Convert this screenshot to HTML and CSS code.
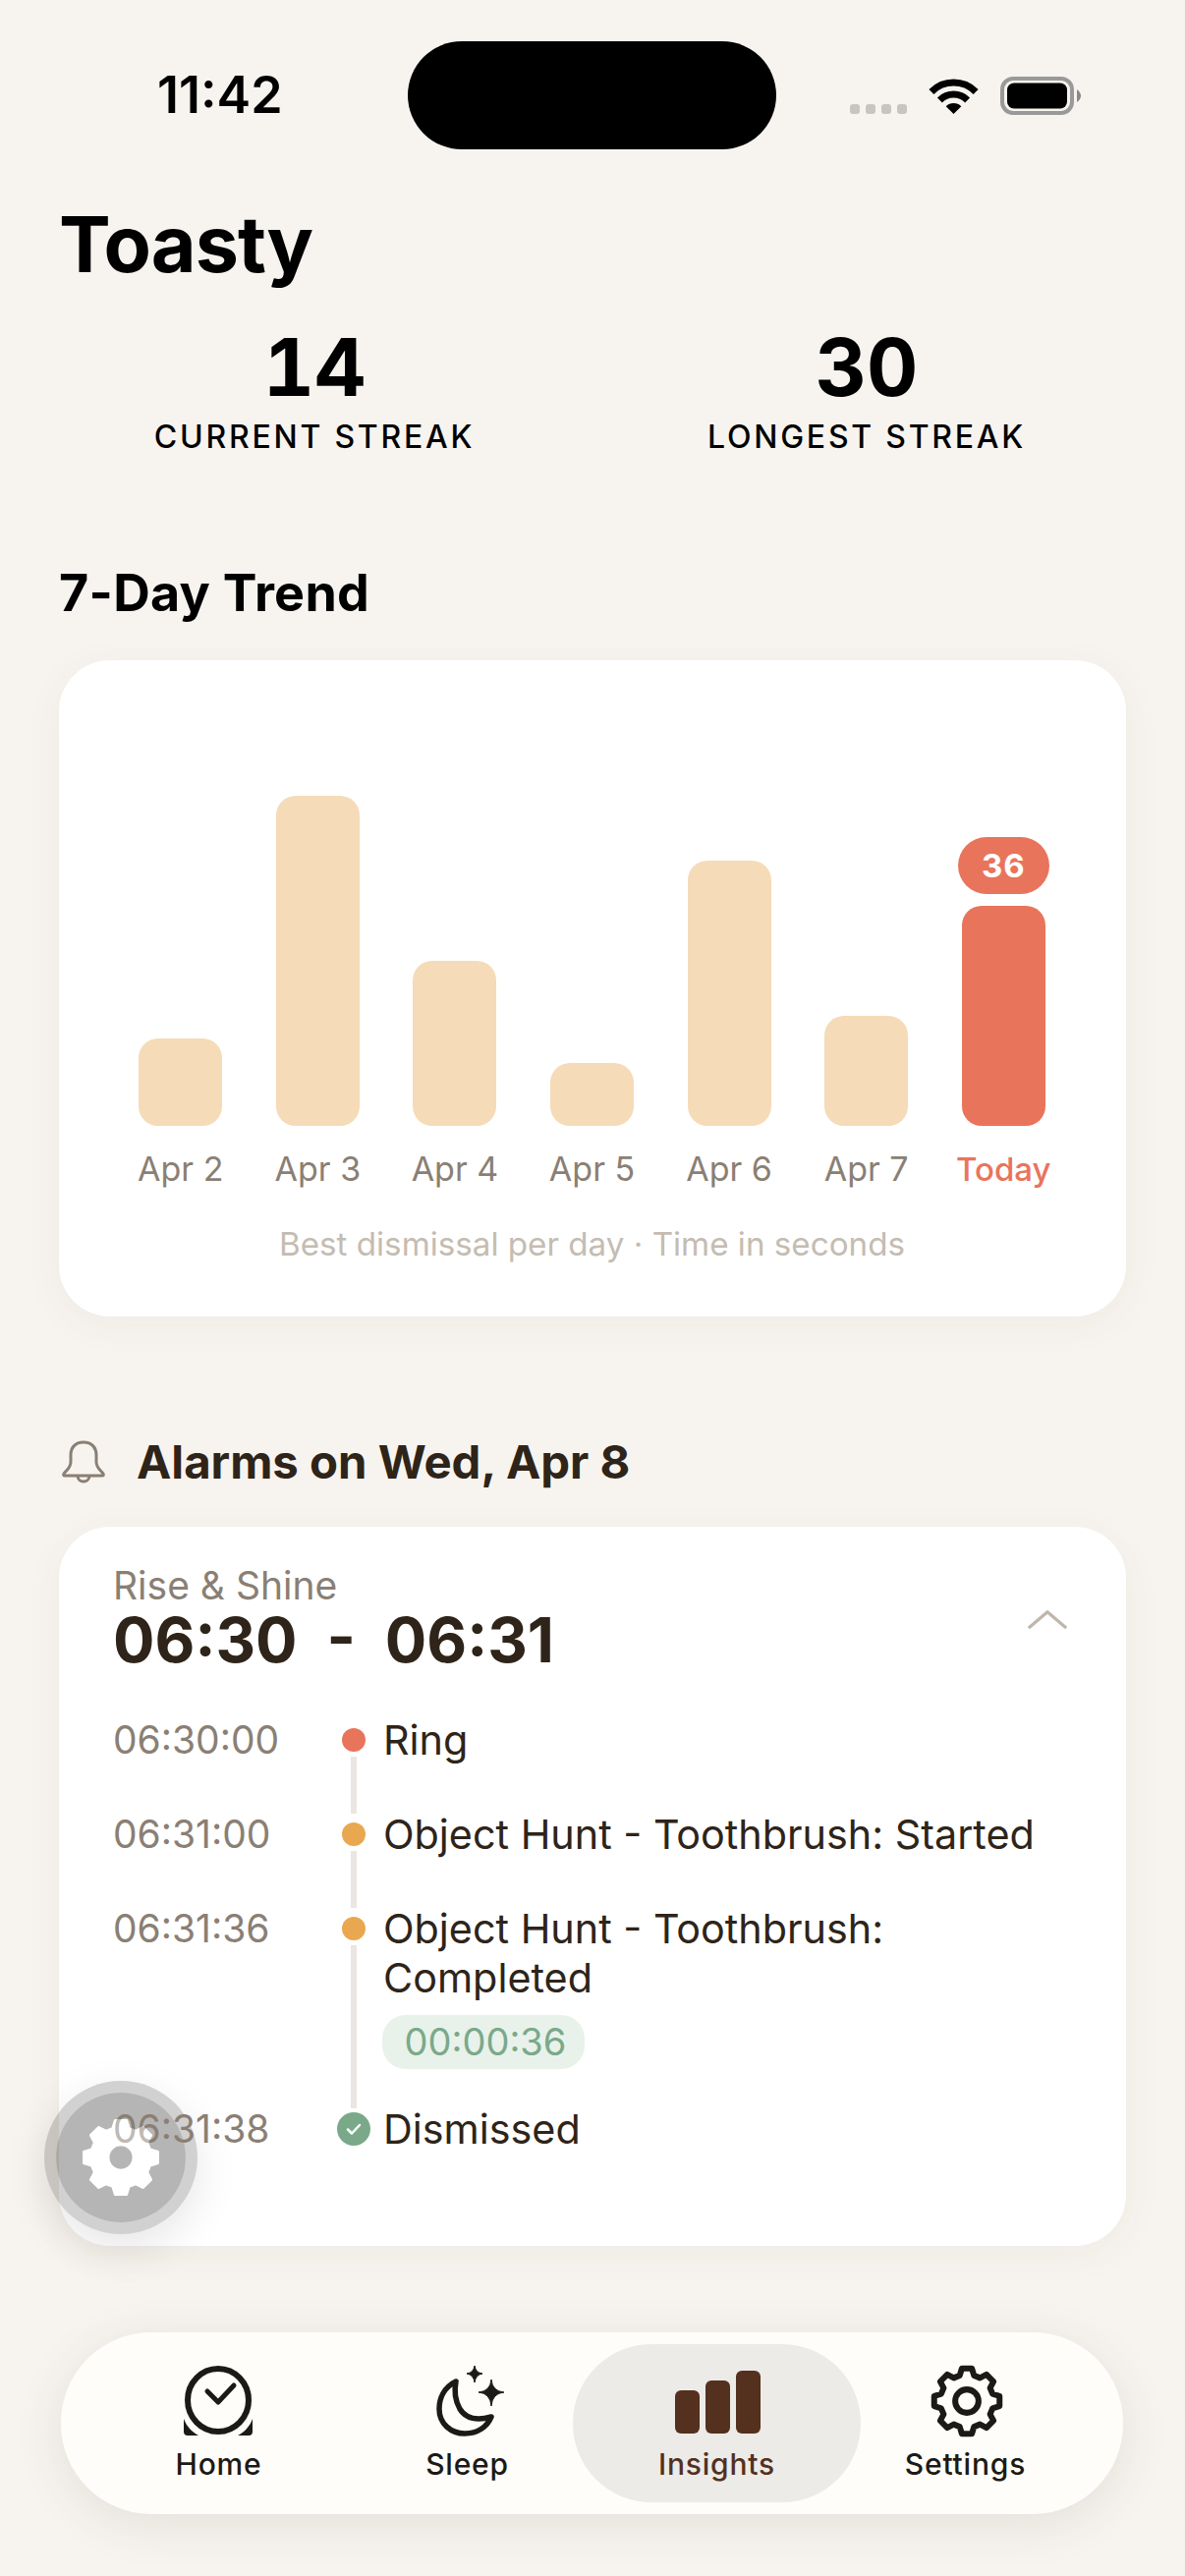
FILE: index.html
```html
<!DOCTYPE html>
<html lang="en">
<head>
<meta charset="utf-8">
<title>Toasty Insights</title>
<link rel="stylesheet" href="styles.css">
</head>
<body>
<div class="screen">
  <header class="status">
    <span class="clock">11:42</span>
    <div class="island"></div>
    <div class="signal"><i></i><i></i><i></i><i></i></div>
    <svg class="wifi" viewBox="0 0 51 37"><path d="M2.9 14.4A32 32 0 0 1 48.1 14.4M11.4 22.9A20 20 0 0 1 39.6 22.9" fill="none" stroke="#000" stroke-width="7"/><path d="M25.5 37L17.7 29.2A11 11 0 0 1 33.3 29.2Z" fill="#000"/></svg>
    <svg class="battery" viewBox="0 0 82 39"><rect x="2" y="2" width="71" height="35" rx="11" fill="none" stroke="#999" stroke-width="4"/><rect x="7" y="6.500" width="61" height="26" rx="7" fill="#000"/><path d="M78 13Q82 16 82 19.500Q82 23 78 26Z" fill="#888"/></svg>
  </header>

  <h1 class="app-title">Toasty</h1>

  <section class="streaks">
    <div class="streak"><div class="streak-num">14</div><div class="streak-label">CURRENT STREAK</div></div>
    <div class="streak"><div class="streak-num">30</div><div class="streak-label">LONGEST STREAK</div></div>
  </section>

  <h2 class="section-title">7-Day Trend</h2>

  <section class="card chart-card">
    <div class="chart">
      <div class="col"><div class="bar" style="height:89px"></div><span class="day">Apr 2</span></div>
      <div class="col"><div class="bar" style="height:336px"></div><span class="day">Apr 3</span></div>
      <div class="col"><div class="bar" style="height:168px"></div><span class="day">Apr 4</span></div>
      <div class="col"><div class="bar" style="height:64px"></div><span class="day">Apr 5</span></div>
      <div class="col"><div class="bar" style="height:270px"></div><span class="day">Apr 6</span></div>
      <div class="col"><div class="bar" style="height:112px"></div><span class="day">Apr 7</span></div>
      <div class="col col-today"><span class="bubble">36</span><div class="bar bar-today" style="height:224px"></div><span class="day day-today">Today</span></div>
    </div>
    <p class="chart-note">Best dismissal per day · Time in seconds</p>
  </section>

  <div class="alarms-head">
    <svg class="bell" viewBox="0 0 46 44"><path d="M23 2C14 2 10 8 10 15V22C10 28 6 30 3 34Q2 36 4 36H42Q44 36 43 34C40 30 36 28 36 22V15C36 8 32 2 23 2ZM17 36C17 44 29 44 29 36" fill="none" stroke="#8a7f74" stroke-width="3" stroke-linejoin="round"/></svg>
    <h2 class="alarms-title">Alarms on Wed, Apr 8</h2>
  </div>

  <section class="card alarm-card">
    <div class="alarm-top">
      <div>
        <div class="alarm-name">Rise &amp; Shine</div>
        <div class="alarm-range">06:30&nbsp; - &nbsp;06:31</div>
      </div>
      <svg class="chevron" viewBox="0 0 44 22"><path d="M2 20L22 3L42 20" fill="none" stroke="#bfb6ac" stroke-width="3.500" stroke-linecap="round" stroke-linejoin="round"/></svg>
    </div>
    <ol class="timeline">
      <li class="event line-short"><span class="ev-time">06:30:00</span><span class="dot dot-ring"></span><div class="ev-text">Ring</div></li>
      <li class="event line-short"><span class="ev-time">06:31:00</span><span class="dot dot-hunt"></span><div class="ev-text">Object Hunt - Toothbrush: Started</div></li>
      <li class="event event-tall line-short"><span class="ev-time">06:31:36</span><span class="dot dot-hunt"></span><div class="ev-text">Object Hunt - Toothbrush:<br>Completed<div class="duration">00:00:36</div></div></li>
      <li class="event"><span class="ev-time ev-time-over">06:31:38</span>
        <svg class="dot-done" viewBox="0 0 34 34"><circle cx="17" cy="17" r="17" fill="#7aa98a"/><path d="M11 17.500L15 21.500L23 13" fill="none" stroke="#fff" stroke-width="2.500" stroke-linecap="round" stroke-linejoin="round"/></svg>
        <div class="ev-text">Dismissed</div></li>
    </ol>
  </section>

  <button class="fab" type="button" aria-label="Settings shortcut">
    <svg class="fab-gear" viewBox="0 0 48 48"><path fill-rule="evenodd" fill="#fff" stroke="#fff" stroke-width="1.500" stroke-linejoin="round" d="M19.400 7.500L20.800 3H27.200L28.600 7.500L32.410 9.080L36.590 6.890L41.110 11.410L38.920 15.590L40.500 19.400L45 20.800V27.200L40.500 28.600L38.920 32.410L41.110 36.590L36.590 41.110L32.410 38.920L28.600 40.500L27.200 45H20.800L19.400 40.500L15.590 38.920L11.410 41.110L6.890 36.590L9.080 32.410L7.500 28.600L3 27.200V20.800L7.500 19.400L9.080 15.590L6.890 11.410L11.410 6.890L15.590 9.080ZM24 16.750A7.250 7.250 0 1 0 24 31.250A7.250 7.250 0 1 0 24 16.750Z"/></svg>
  </button>
  <svg class="fab-glaze" viewBox="0 0 48 48" aria-hidden="true"><path fill-rule="evenodd" fill="#fff" stroke="#fff" stroke-width="1.500" stroke-linejoin="round" d="M19.400 7.500L20.800 3H27.200L28.600 7.500L32.410 9.080L36.590 6.890L41.110 11.410L38.920 15.590L40.500 19.400L45 20.800V27.200L40.500 28.600L38.920 32.410L41.110 36.590L36.590 41.110L32.410 38.920L28.600 40.500L27.200 45H20.800L19.400 40.500L15.590 38.920L11.410 41.110L6.890 36.590L9.080 32.410L7.500 28.600L3 27.200V20.800L7.500 19.400L9.080 15.590L6.890 11.410L11.410 6.890L15.590 9.080ZM24 16.750A7.250 7.250 0 1 0 24 31.250A7.250 7.250 0 1 0 24 16.750Z"/></svg>

  <nav class="tabbar">
    <a class="tab">
      <svg class="tab-icon icon-home" viewBox="0 0 72 72"><ellipse cx="35" cy="35" rx="31" ry="32" fill="none" stroke="#1c1a16" stroke-width="6"/><path d="M24 26L35 37L51 20" fill="none" stroke="#1c1a16" stroke-width="5" stroke-linecap="round" stroke-linejoin="round"/><path d="M0 54C3 62 8 67 15 71H4Q0 71 0 67ZM70 54C67 62 62 67 55 71H66Q70 71 70 67Z" fill="#1c1a16"/></svg>
      <span class="tab-label">Home</span>
    </a>
    <a class="tab">
      <svg class="tab-icon icon-sleep" viewBox="0 0 70 72"><path d="M20 16C8 22 3 33 3 44C3 59 15 69 29 69C42 69 52 62 56 52C42 56 30 54 24 44C19 35 18 26 20 16Z" fill="none" stroke="#1c1a16" stroke-width="5.500" stroke-linejoin="round"/><path d="M56 14Q57 26 69 27Q57 28 56 41Q55 28 43 27Q55 26 56 14ZM39 0Q40 7 47 8Q40 9 39 17Q38 9 31 8Q38 7 39 0Z" fill="#1c1a16" stroke="#1c1a16" stroke-width="1"/></svg>
      <span class="tab-label">Sleep</span>
    </a>
    <a class="tab tab-active">
      <svg class="tab-icon icon-insights" viewBox="0 0 87 64"><rect x="0" y="20" width="25" height="44" rx="6" fill="#54301e"/><rect x="31" y="10" width="25" height="54" rx="6" fill="#54301e"/><rect x="62" y="0" width="25" height="64" rx="6" fill="#54301e"/></svg>
      <span class="tab-label">Insights</span>
    </a>
    <a class="tab">
      <svg class="tab-icon icon-settings" viewBox="0 0 48 48"><path fill="none" stroke="#1c1a16" stroke-width="3.800" stroke-linejoin="round" d="M19.400 7.500L20.800 3H27.200L28.600 7.500L32.410 9.080L36.590 6.890L41.110 11.410L38.920 15.590L40.500 19.400L45 20.800V27.200L40.500 28.600L38.920 32.410L41.110 36.590L36.590 41.110L32.410 38.920L28.600 40.500L27.200 45H20.800L19.400 40.500L15.590 38.920L11.410 41.110L6.890 36.590L9.080 32.410L7.500 28.600L3 27.200V20.800L7.500 19.400L9.080 15.590L6.890 11.410L11.410 6.890L15.590 9.080Z"/><circle cx="24" cy="24" r="7.500" fill="none" stroke="#1c1a16" stroke-width="3.800"/></svg>
      <span class="tab-label">Settings</span>
    </a>
  </nav>
</div>
</body>
</html>
```
FILE: styles.css
```css
* { box-sizing: border-box; }
html, body { margin: 0; padding: 0; }
body { background: #f7f4ef; font-family: Inter, "Liberation Sans", sans-serif; color: #2e2419; }

.screen { position: relative; width: 1206px; height: 2622px; overflow: hidden; padding: 0 60px; }

.status { position: relative; height: 198px; margin: 0 -60px; }
.clock { position: absolute; left: 160px; top: 67px; font-size: 52px; line-height: 60px; font-weight: 600; color: #000; }
.island { position: absolute; left: 415px; top: 42px; width: 375px; height: 110px; border-radius: 55px; background: #000; }
.signal { position: absolute; left: 865px; top: 106px; display: flex; gap: 6px; }
.signal i { width: 10px; height: 10px; border-radius: 3px; background: #c8c4c0; }
.wifi { position: absolute; left: 945px; top: 79px; width: 51px; height: 37px; }
.battery { position: absolute; left: 1018px; top: 78px; width: 82px; height: 39px; }

.app-title { margin: 0; font-size: 79px; line-height: 100px; font-weight: 700; color: #000; height: 125px; letter-spacing: -1px; }

.streaks { display: grid; grid-template-columns: 562px 562px; margin: 0 -17px 0 -21px; height: 175px; }
.streak { text-align: center; color: #000; padding-top: 3px; }
.streak-num { font-size: 81px; line-height: 96px; font-weight: 700; font-feature-settings: "tnum"; }
.streak-label { margin-top: 3px; font-size: 32px; line-height: 40px; font-weight: 500; letter-spacing: 2.750px; }

.section-title { margin: 76px 0 0; font-size: 52px; line-height: 60px; font-weight: 700; color: #000; height: 98px; letter-spacing: 0.3px; }

.card { background: #fff; border-radius: 52px; box-shadow: 0 8px 40px rgba(80, 60, 40, 0.05); }

.chart-card { height: 668px; padding: 0 55px 0 54px; }
.chart { display: flex; height: 542px; align-items: flex-end; }
.col { flex: 1; display: flex; flex-direction: column; align-items: center; }
.bar { width: 85px; background: #f5dbb7; border-radius: 20px; }
.bar-today { background: #e9745c; }
.day { margin-top: 20px; font-size: 34px; line-height: 48px; height: 48px; color: #8a7f74; }
.day-today { font-size: 33px; color: #e9745c; font-weight: 500; }
.bubble { width: 93px; height: 58px; margin-bottom: 12px; border-radius: 29px; background: #e9745c; color: #fff; font-size: 33px; line-height: 58px; font-weight: 700; letter-spacing: 1px; text-align: center; }
.chart-note { margin: 30px 0 0; text-align: center; font-size: 33.200px; line-height: 44px; color: #c4bcb2; }

.alarms-head { display: flex; align-items: center; gap: 31px; margin-top: 112px; height: 72px; padding-left: 2px; }
.bell { width: 46px; height: 44px; }
.alarms-title { margin: 0; font-size: 47.300px; line-height: 60px; font-weight: 700; }

.alarm-card { position: relative; height: 732px; margin-top: 30px; padding: 44px 55px 0; }
.alarm-top { display: flex; justify-content: space-between; align-items: center; height: 152px; padding-bottom: 56px; margin-bottom: -4px; }
.alarm-name { font-size: 39px; line-height: 46px; color: #8a7f74; }
.alarm-range { font-size: 63px; line-height: 64px; font-weight: 700; }
.chevron { width: 40px; height: 20px; margin-right: 5px; margin-top: 4px; }

.timeline { list-style: none; margin: 0; padding: 0; }
.event { position: relative; display: grid; grid-template-columns: 230px 45px 1fr; height: 96px; }
.event-tall { height: 204px; }
.line-short::after { content: ""; position: absolute; left: 242px; width: 6px; top: 42px; bottom: -4px; background: #ebe6e1; }
.ev-time { font-size: 39px; line-height: 50px; color: #8a7f74; }
.ev-time-over { position: relative; z-index: 2; }
.ev-text { font-size: 41.300px; line-height: 50px; }
.dot { width: 24px; height: 24px; border-radius: 50%; margin: 13px 0 0 3px; }
.dot-ring { background: #e9745c; }
.dot-hunt { background: #e9a84f; }
.dot-done { width: 34px; height: 34px; margin: 8px 0 0 -2px; }
.duration { display: block; width: 206px; height: 55px; margin: 13px 0 0 -1px; padding-left: 4px; border-radius: 24px; background: #e8f2ea; color: #7aa98a; font-size: 38px; line-height: 55px; text-align: center; }

.fab { position: absolute; z-index: 1; left: 45px; top: 2118px; width: 156px; height: 156px; padding: 0; border: 12px solid rgba(0, 0, 0, 0.18); background-color: rgba(0, 0, 0, 0.29); background-clip: padding-box; border-radius: 50%; display: flex; align-items: center; justify-content: center; box-shadow: 0 14px 44px rgba(0, 0, 0, 0.1); }
.fab-gear { width: 86px; height: 86px; flex: none; }
.fab-glaze { position: absolute; z-index: 3; left: 80px; top: 2153px; width: 86px; height: 86px; opacity: 0.45; }

.tabbar { position: absolute; left: 62px; top: 2374px; width: 1081px; height: 185px; padding: 12px 0 12px 34px; display: flex; background: #fffdf9; border-radius: 92px; box-shadow: 0 10px 50px rgba(60, 50, 40, 0.1); }
.tab { position: relative; width: 253px; height: 161px; display: flex; flex-direction: column; align-items: center; justify-content: flex-end; padding-bottom: 21px; color: #1c1a16; }
.tab-active { width: 293px; margin: 0 -20px 0 -19px; background: #ecebe7; border-radius: 80px; color: #54301e; }
.tab-label { position: relative; font-size: 30px; line-height: 36px; font-weight: 500; letter-spacing: 0.800px; }
.tab-icon { display: block; margin-bottom: 10px; height: 72px; }
.icon-home { width: 72px; }
.icon-sleep { width: 70px; margin-left: 6px; }
.icon-insights { width: 87px; height: 64px; margin-bottom: 13px; margin-left: 2px; }
.icon-settings { width: 76px; height: 76px; margin-bottom: 8px; margin-left: 2px; }
```
